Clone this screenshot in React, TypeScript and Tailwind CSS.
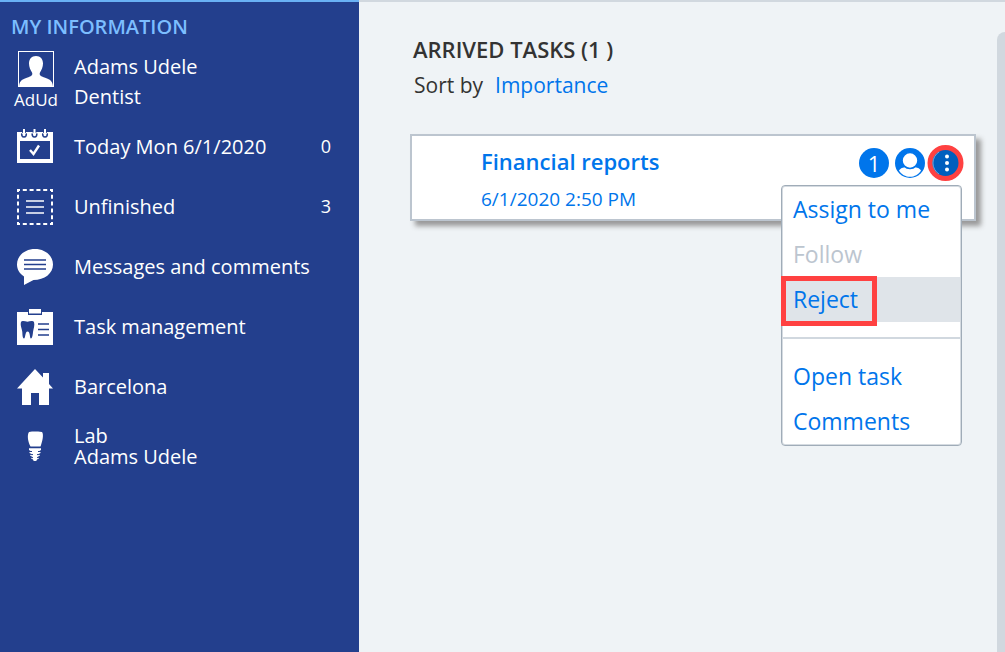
import type { ReactNode } from "react";

function PersonIcon() {
  return (
    <svg width="36" height="36" viewBox="0 0 36 36" aria-hidden="true">
      <rect x=".5" y=".5" width="35" height="35" fill="none" stroke="white" />
      <path
        d="M18 5C13.500 5 11 8 11 12.500C11 16 12.500 19 14 21.500C15 24 13.500 25 11 26C5 28 1.500 29 1 35.500H35C34.500 29 31 28 25 26C22.500 25 21 24 22 21.500C23.500 19 25 16 25 12.500C25 8 22.500 5 18 5Z"
        fill="white"
      />
    </svg>
  );
}

function CalendarIcon() {
  return (
    <svg width="36" height="36" viewBox="0 0 36 36" aria-hidden="true">
      <path d="M0 3H36V34H0ZM3 12V30H33V12Z" fill="white" fillRule="evenodd" />
      {[7, 17.5, 28].map((x) => (
        <g key={x}>
          <path d={`M${x - 2} 4.500A2.300 2.300 0 1 0 ${x + 2} 4.500`} fill="none" stroke="#233f8d" strokeWidth="1.600" />
          <path d={`M${x - 1.3} 0V4M${x + 1.3} 2V4`} stroke="#233f8d" strokeWidth="1" />
          <path d={`M${x} 0V6`} stroke="white" strokeWidth="2" />
        </g>
      ))}
      <path d="M13 21L16.500 25L22 16.500" fill="none" stroke="white" strokeWidth="2.400" />
    </svg>
  );
}

function UnfinishedIcon() {
  return (
    <svg width="36" height="36" viewBox="0 0 36 36" aria-hidden="true">
      <rect x="1" y="1" width="34" height="34" fill="none" stroke="white" strokeWidth="2" strokeDasharray="4 2.800" strokeDashoffset="2" />
      <path d="M9 12H27M9 18H27M9 24H27" stroke="white" strokeWidth="1.700" />
    </svg>
  );
}

function MessageIcon() {
  return (
    <svg width="36" height="36" viewBox="0 0 36 36" aria-hidden="true">
      <path d="M18 0C8 0 0 6.500 0 15.500C0 20.500 2.500 24.500 7 27.500V36L16.500 31C27.500 31 36 24.500 36 15.500C36 6.500 28 0 18 0Z" fill="white" />
      <path d="M7 11H29M7 15.500H29M7 20H29" stroke="#233f8d" strokeWidth="1.700" />
    </svg>
  );
}

function TaskIcon() {
  return (
    <svg width="36" height="36" viewBox="0 0 36 36" aria-hidden="true">
      <path d="M0 3H11V6H25V3H36V36H0Z" fill="white" />
      <rect x="12" y="0" width="12" height="4.500" fill="white" />
      <path
        d="M4 13C5 11.500 7.500 12 10.500 12.800C13 12 16 11.500 17 13C18 16 16.500 20 16 23C15.800 26 15 29.500 14 29.500C12.500 29.500 13.500 22.500 10.500 22.500C8 22.500 8.500 29.500 7 29.500C5.500 29 5.500 26 5.300 23C5 20 3 16 4 13Z"
        fill="#233f8d"
      />
      <path d="M21 15H32M21 20.500H32M21 26H32" stroke="#233f8d" strokeWidth="1.500" />
    </svg>
  );
}

function HouseIcon() {
  return (
    <svg width="36" height="36" viewBox="0 0 36 36" aria-hidden="true">
      <path d="M18 0L26 8.500V4H32V15L36 19.500H32V36H22V24H14V36H5V19.500H0Z" fill="white" />
    </svg>
  );
}

function ImplantIcon() {
  return (
    <svg width="36" height="36" viewBox="0 0 36 36" aria-hidden="true">
      <path
        d="M12 3C14 2 16 2.500 18 2.500C20 2.500 22 2 25 3C27 5.500 25.500 12 23.500 17.500H13.500C11 13 9.800 6 12 3Z"
        fill="white"
      />
      <path d="M12 19.200H24V21L22.500 22H23.500V24L21.500 25H23V26.500L20.500 28H22V29.500L19.500 30.500H20.500L19 32H17L15.500 30.500H16.500L14 29.500V28H15.500L13 26.500V25H14.500L12.500 24V22H13.500L12 21Z" fill="white" />
      <path d="M12 22.500H15M21 22.500H24M13 25.600H16M20 25.600H23M14 28.600H16M20 28.600H22" stroke="#233f8d" strokeWidth="1" />
    </svg>
  );
}

function NavRow({ icon, children, count }: { icon: ReactNode; children: ReactNode; count?: number }) {
  return (
    <li>
      <a href="#" className="flex h-15 items-center pl-[17px] pr-7">
        <span className="w-[57px] shrink-0 pt-[2px]">{icon}</span>
        <span className="grow">{children}</span>
        {count !== undefined && <span className="text-lg">{count}</span>}
      </a>
    </li>
  );
}

function MenuItem({ label, className = "", disabled = false }: { label: string; className?: string; disabled?: boolean }) {
  return (
    <button
      type="button"
      role="menuitem"
      disabled={disabled}
      className={`block h-[45px] w-full pl-[10px] text-left text-[#0075eb] disabled:text-[#bcc5cf] ${className}`}
    >
      {label}
    </button>
  );
}

function TaskMenu() {
  return (
    <div
      role="menu"
      aria-label="Task actions"
      className="absolute top-[49px] right-3 w-[181px] rounded-[4px] border border-[#a0acb8] bg-white p-px text-[23px] shadow-[inset_0_0_0_1px_#d5dbe1]"
    >
      <MenuItem label="Assign to me" />
      <MenuItem label="Follow" disabled />
      <div className="relative">
        <MenuItem label="Reject" className="bg-[#dfe4e9]" />
        <span className="pointer-events-none absolute -top-px -left-[2px] h-[50px] w-24 border-5 border-[#ff4141]" />
      </div>
      <hr className="my-[15px] border-t-2 border-[#d1d8df]" />
      <MenuItem label="Open task" />
      <MenuItem label="Comments" />
    </div>
  );
}

function TaskCard() {
  return (
    <article className="relative mt-[30px] mr-[21px] ml-[51px] flex h-[87px] border-2 border-[#bcc5cf] bg-white pl-[69px] text-[#0075eb] shadow-[5px_5px_5px_#999]">
      <div className="grow">
        <h2 className="mt-[7px] text-[22px] leading-9 font-semibold">
          <a href="#">Financial reports</a>
        </h2>
        <p className="text-[19px] leading-10">6/1/2020 2:50 PM</p>
      </div>
      <div className="mt-[9px] mr-[10px] flex h-9 items-center">
        <span className="mr-[6px] flex size-[30px] items-center justify-center rounded-full bg-[#0075eb] text-[22px] leading-7 text-white">1</span>
        <button type="button" aria-label="Assignee" className="mr-[2px]">
          <svg width="30" height="30" viewBox="0 0 30 30" aria-hidden="true">
            <circle cx="15" cy="15" r="15" fill="#0075eb" />
            <path d="M4 22.500C6 19.500 9 19 15 19C21 19 24 19.500 26 22.500C23.500 26.500 19.500 28.800 15 28.800C10.500 28.800 6.500 26.500 4 22.500Z" fill="white" />
            <circle cx="15" cy="12.500" r="8" fill="white" stroke="#0075eb" strokeWidth="1.600" />
          </svg>
        </button>
        <button type="button" aria-label="More actions" aria-haspopup="menu" aria-expanded="true">
          <svg width="37" height="36" viewBox="0 0 37 36" aria-hidden="true">
            <circle cx="18.500" cy="18" r="15.500" fill="#005fbe" stroke="#ff4141" strokeWidth="5" />
            <path d="M12 7A13 13 0 0 0 12 29" fill="none" stroke="#6ea6dc" strokeWidth="1" />
            <circle cx="20" cy="11.500" r="2" fill="white" />
            <circle cx="20" cy="18" r="2" fill="white" />
            <circle cx="20" cy="24.500" r="2" fill="white" />
          </svg>
        </button>
      </div>
      <TaskMenu />
    </article>
  );
}

export default function App() {
  return (
    <div className="flex min-h-screen bg-[#eff3f6] font-['Open_Sans','Noto_Sans',sans-serif]">
      <aside className="w-[359px] shrink-0 border-t-2 border-[#69b1f5] bg-[#233f8d] text-[20px] leading-[21px] text-white">
        <h2 className="pt-[10px] pl-[11px] text-[20px] leading-[30px] font-semibold text-[#7cbeff]">MY INFORMATION</h2>
        <div className="flex h-[74px]">
          <div className="flex w-[72px] shrink-0 flex-col items-center pt-[9px]">
            <PersonIcon />
            <span className="text-[17px] leading-[26px]">AdUd</span>
          </div>
          <p className="pt-[10px] pl-[2px] leading-[30px]">
            Adams Udele
            <br />
            Dentist
          </p>
        </div>
        <nav aria-label="My information">
          <ul>
            <NavRow icon={<CalendarIcon />} count={0}>Today Mon 6/1/2020</NavRow>
            <NavRow icon={<UnfinishedIcon />} count={3}>Unfinished</NavRow>
            <NavRow icon={<MessageIcon />}>Messages and comments</NavRow>
            <NavRow icon={<TaskIcon />}>Task management</NavRow>
            <NavRow icon={<HouseIcon />}>Barcelona</NavRow>
            <NavRow icon={<ImplantIcon />}>
              Lab
              <br />
              Adams Udele
            </NavRow>
          </ul>
        </nav>
      </aside>
      <div className="flex grow border-t-2 border-[#d1d8df]">
        <main className="grow pt-[29px]">
          <h1 className="pl-[54px] text-[22px] leading-9 font-semibold text-[#333]">ARRIVED TASKS (1 )</h1>
          <p className="pl-[55px] text-[21px] leading-[37px] text-[#333]">
            Sort by
            <a href="#" className="ml-3 text-[#0075eb]">Importance</a>
          </p>
          <TaskCard />
        </main>
        <div className="mt-[30px] w-2 shrink-0 rounded-tl-lg bg-[#d1d8df]" />
      </div>
    </div>
  );
}
